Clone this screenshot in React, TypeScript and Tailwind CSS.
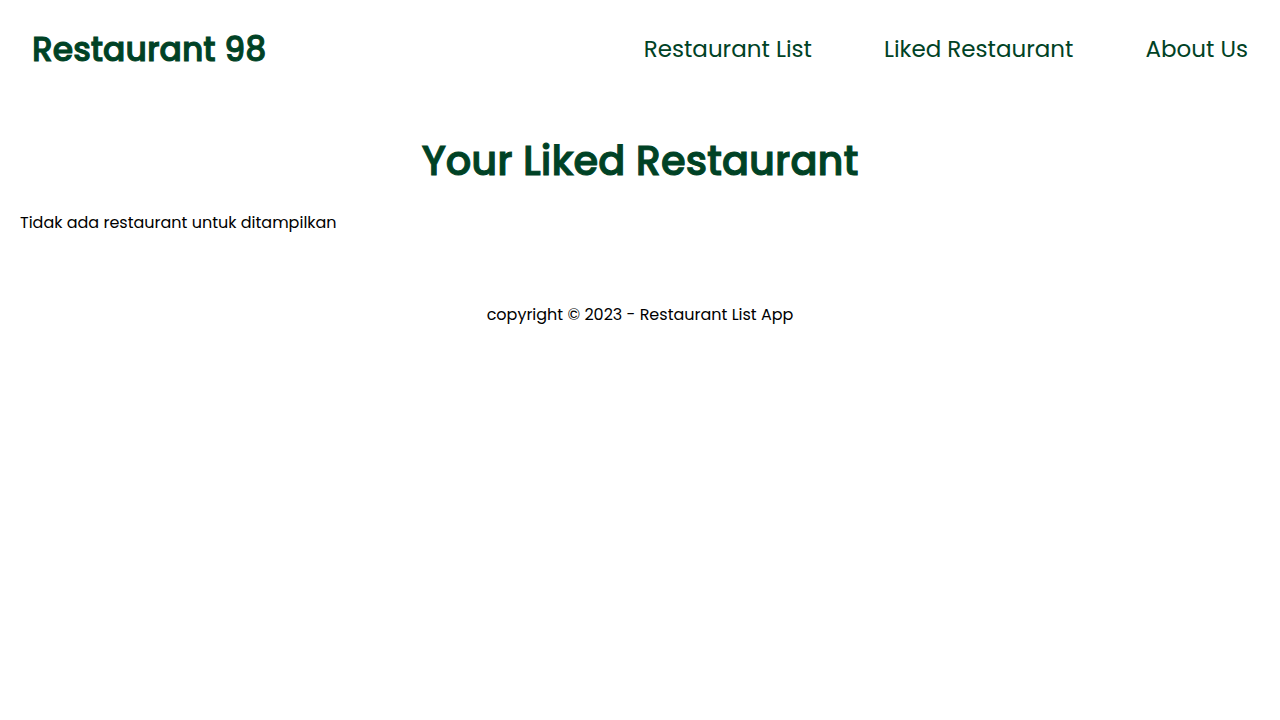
const links = ["Restaurant List", "Liked Restaurant", "About Us"];

export default function App() {
  return (
    <div className="min-h-screen bg-white font-['Poppins','Inter',sans-serif] text-black">
      <header className="flex items-start justify-between px-8 py-6">
        <h1 className="text-[33px] leading-[51px] font-medium text-[#004225] [-webkit-text-stroke:1px_#004225]">
          Restaurant 98
        </h1>
        <nav>
          <ul className="flex gap-[72px]">
            {links.map((label) => (
              <li key={label}>
                <a href="#" className="block text-[23px] leading-[50px] text-[#004225]">
                  {label}
                </a>
              </li>
            ))}
          </ul>
        </nav>
      </header>
      <main className="px-5 pt-8">
        <h2 className="text-center text-[40px] leading-[60px] font-medium text-[#004225] [-webkit-text-stroke:1px_#004225]">
          Your Liked Restaurant
        </h2>
        <p className="mt-5 text-base">Tidak ada restaurant untuk ditampilkan</p>
      </main>
      <footer className="mt-17 text-center">
        <p className="text-base">copyright © 2023 - Restaurant List App</p>
      </footer>
    </div>
  );
}
